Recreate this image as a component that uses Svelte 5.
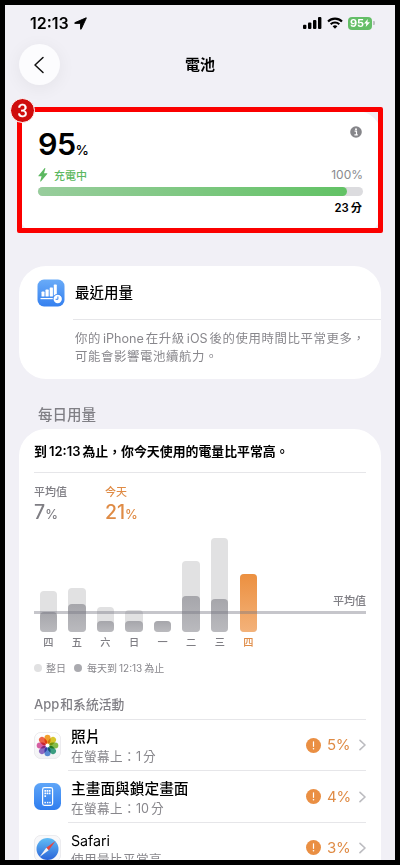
<script>
  const days = [
    { label: '四', full: 41.5, part: 20 },
    { label: '五', full: 44, part: 28 },
    { label: '六', full: 25, part: 11.5 },
    { label: '日', full: 22.5, part: 11.5 },
    { label: '一', full: 11.5, part: 11.5 },
    { label: '二', full: 71.5, part: 36 },
    { label: '三', full: 94, part: 33 },
    { label: '四', full: 58, part: 58, today: true }
  ];
  const apps = [
    { id: 'photos', name: '照片', note: '在螢幕上：', num: '1', unit: '分', pct: '5%' },
    { id: 'home', name: '主畫面與鎖定畫面', note: '在螢幕上：', num: '10', unit: '分', pct: '4%' },
    { id: 'safari', name: 'Safari', note: '使用量比平常高', num: '', unit: '', pct: '3%' }
  ];
  const petals = ['#f39a1e', '#d9c51b', '#7fbd3c', '#2f9d7c', '#4f86d8', '#8b62c4', '#d9559f', '#ee5a3c'];
</script>

<div class="device">
  <div class="status">
    <span class="time">12:13</span>
    <svg class="loc" width="13" height="13" viewBox="0 0 13 13"><path d="M12.2.8 1 5.6c-.5.3-.4.8.1.8h5.4v5.4c0 .6.6.7.8.1L12.3 1.1c.1-.2 0-.4-.1-.3Z" stroke="#000" stroke-width=".9" stroke-linejoin="round" /></svg>
    <svg class="signal" width="19" height="12" viewBox="0 0 19 12"><rect y="7.8" width="3.4" height="4.2" rx="1" /><rect x="5" y="5.6" width="3.4" height="6.4" rx="1" /><rect x="10" y="3" width="3.4" height="9" rx="1" /><rect x="15" width="3.4" height="12" rx="1" /></svg>
    <svg class="wifi" width="16" height="12" viewBox="0 0 16 12"><g fill="none" stroke="#000" stroke-width="2.1"><path d="M1 4.5a10 10 0 0 1 14 0" /><path d="M3.7 7.3a6.2 6.2 0 0 1 8.6 0" /></g><path d="M5.6 9.3a3.5 3.5 0 0 1 4.8 0L8 11.8Z" /></svg>
    <div class="batt"><span>95</span><svg width="6" height="8" viewBox="0 0 6 8"><path d="M3.8 0 0 4.6h2.3L1.7 8 6 3.2H3.4Z" fill="#fff" /></svg></div>
    <i class="cap"></i>
  </div>

  <header>
    <div class="back"><svg width="12" height="18" viewBox="0 0 12 18"><path d="M10 1.5 2 9l8 7.5" fill="none" stroke="#111" stroke-width="1.5" stroke-linecap="round" stroke-linejoin="round" /></svg></div>
    <h1>電池</h1>
  </header>

  <section class="card level">
    <div class="frame"></div>
    <div class="step">3</div>
    <div class="top">
      <div class="big">95<small>%</small></div>
      <svg class="info" width="12" height="12" viewBox="0 0 12 12"><circle cx="6" cy="6" r="5.8" fill="#86868a" /><circle cx="6" cy="3.2" r="1" fill="#fff" /><path d="M4.6 5.2h1.9v3.5M4.4 8.9h3.4" fill="none" stroke="#fff" stroke-width="1.2" /></svg>
    </div>
    <div class="charge">
      <svg width="10" height="14" viewBox="0 0 10 14"><path d="M6.5.3.4 7.7c-.2.3 0 .5.2.5h3L2.2 13c-.1.6.4.8.7.4l6.3-7.5c.3-.3.1-.6-.3-.6H6L7.3.8c.2-.6-.4-.9-.8-.5Z" fill="#5cb860" /></svg>
      <span class="state">充電中</span><span class="max">100%</span>
    </div>
    <div class="track"><div class="fill" style="width: 95.2%"></div></div>
    <div class="left">23<b>分</b></div>
  </section>

  <section class="card recent">
    <div class="rhead">
      <svg width="28" height="28" viewBox="0 0 28 28">
        <defs><linearGradient id="rb" x2="0" y2="1"><stop stop-color="#69abf8" /><stop offset="1" stop-color="#3580ef" /></linearGradient></defs>
        <rect x=".5" y=".5" width="27" height="27" rx="6.5" fill="url(#rb)" />
        <g fill="#fff"><rect x="4.5" y="12.6" width="3" height="5" rx=".6" /><rect x="8.5" y="10.6" width="3.2" height="7" rx=".6" /><rect x="12.7" y="8.4" width="3.2" height="9.2" rx=".6" /><rect x="16.8" y="5.6" width="3" height="12" rx=".6" /><rect x="3.5" y="19" width="13" height="1.2" /><circle cx="20.7" cy="20" r="5" fill="#3b86f1" /><circle cx="20.7" cy="20" r="4.2" /></g>
        <path d="M20.9 17.5v2.8h-2.3" fill="none" stroke="#3b86f1" stroke-width="1" />
      </svg>
      <span>最近用量</span>
    </div>
    <div class="rbody">
      <p>你的<em>iPhone</em>在升級<em>iOS</em>後的使用時間比平常更多，</p>
      <p>可能會影響電池續航力。</p>
    </div>
  </section>

  <h2>每日用量</h2>

  <section class="card daily">
    <div class="summary">到<em>12:13</em>為止，你今天使用的電量比平常高。</div>
    <div class="stats">
      <div class="stat"><span>平均值</span><strong>7<small>%</small></strong></div>
      <div class="stat now"><span>今天</span><strong>21<small>%</small></strong></div>
    </div>
    <div class="chart">
      <div class="bars">
        {#each days as d}
          <div class="day" class:today={d.today}>
            <div class="bar" style="height: {d.full}px"><div class="part" style="height: {d.part}px"></div></div>
            <span>{d.label}</span>
          </div>
        {/each}
      </div>
      <div class="avg"></div>
      <span class="avgname">平均值</span>
    </div>
    <div class="legend"><i></i><span class="whole">整日</span><i class="dark"></i><span>每天到<em>12:13</em>為止</span></div>
    <h3>App<b>和系統活動</b></h3>
    {#each apps as a, i}
      <div class="row">
        <div class="icon">
          {#if a.id === 'photos'}
            <svg width="27" height="27" viewBox="0 0 27 27"><defs><linearGradient id="pw" x2="0" y2="1"><stop stop-color="#fff" /><stop offset="1" stop-color="#f2f2f4" /></linearGradient></defs><rect x=".4" y=".4" width="26.2" height="26.2" rx="6.5" fill="url(#pw)" stroke="#e6e6ea" stroke-width=".8" />
              {#each petals as c, k}<rect class="petal" x="10.5" y="2.7" width="6" height="9" rx="3" fill={c} transform="rotate({k * 45} 13.5 13.5)" />{/each}
              <circle cx="13.5" cy="13.5" r="1.7" fill="#fff" /></svg>
          {:else if a.id === 'home'}
            <svg width="27" height="27" viewBox="0 0 27 27"><defs><linearGradient id="hb" x2="0" y2="1"><stop stop-color="#5fa6f8" /><stop offset="1" stop-color="#2f7def" /></linearGradient></defs><rect width="27" height="27" rx="6.5" fill="url(#hb)" /><rect x="8.6" y="4.7" width="10" height="17.6" rx="1.8" fill="none" stroke="#fff" stroke-width="1.2" />
              <g fill="#fff">{#each [7, 9.6, 12.2] as y}{#each [10.4, 12.6, 14.8] as x}{#if y < 12 || x < 12}<rect {x} {y} width="1.7" height="1.7" rx=".3" />{/if}{/each}{/each}<rect x="10.4" y="18.8" width="1.5" height="1.5" /><rect x="12.9" y="18.8" width="1.5" height="1.5" /><rect x="15.2" y="18.8" width="1.5" height="1.5" /></g></svg>
          {:else}
            <svg width="27" height="27" viewBox="0 0 27 27"><defs><linearGradient id="sb" x2="0" y2="1"><stop stop-color="#62bdf5" /><stop offset="1" stop-color="#2a63d8" /></linearGradient></defs><rect x=".4" y=".4" width="26.2" height="26.2" rx="6.5" fill="#f8f8fa" stroke="#e6e6ea" stroke-width=".8" /><circle cx="13.5" cy="14" r="11" fill="url(#sb)" /><path d="m21.5 6-9.2 6.8 2.4 2.4Z" fill="#e8443c" /><path d="m5.5 22 6.8-9.2 2.4 2.4Z" fill="#f3f3f6" /></svg>
          {/if}
        </div>
        <div class="body" class:first={i === 0}>
          <div class="txt"><div class="name" class:latin={i === 2}>{a.name}</div><div class="note">{a.note}<em>{a.num}</em>{a.unit}</div></div>
          <svg class="warn" width="15" height="15" viewBox="0 0 15 15"><circle cx="7.5" cy="7.5" r="7.5" fill="#ea8f43" /><path d="M7.5 3.8v4.5" stroke="#fff" stroke-width="1.2" stroke-linecap="round" /><circle cx="7.5" cy="10.8" r=".8" fill="#fff" /></svg>
          <span class="pct">{a.pct}</span>
          <svg class="chev" width="7" height="12" viewBox="0 0 7 12"><path d="m1 1.3 5 4.7-5 4.7" fill="none" stroke="#bcbcc0" stroke-width="1.6" stroke-linecap="round" stroke-linejoin="round" /></svg>
        </div>
      </div>
    {/each}
  </section>
</div>

<style>
  :global(body) { background: #000; }
  .device {
    box-sizing: border-box; width: 400px; height: 865px; border: 5px solid #000; background: #f1f0f6;
    overflow: hidden; font-family: Inter, "Noto Sans CJK TC", sans-serif; color: #000; white-space: nowrap;
  }
  .device * { box-sizing: border-box; }
  svg { display: block; flex: none; }
  em, i, b { font-style: normal; }
  b { font-weight: inherit; }
  h1, h2, h3, p { margin: 0; }
  .status { display: flex; align-items: center; height: 36px; padding: 0 20px 0 25px; }
  .time { font-size: 16px; font-weight: 600; line-height: 36px; width: 44px; flex: none; }
  .signal { margin-left: 216px; }
  .wifi { margin-left: 5px; }
  .batt { display: flex; align-items: center; justify-content: center; margin-left: 5px; width: 24px; height: 13px; border-radius: 4px; background: #64be67; color: #fff; font-size: 11px; font-weight: 700; flex: none; }
  .cap { width: 1.5px; height: 4px; margin-left: 1px; background: #c0c0c4; border-radius: 0 1px 1px 0; flex: none; }
  header { display: flex; align-items: center; height: 47px; padding-left: 14px; }
  .back { display: flex; align-items: center; justify-content: center; width: 41px; height: 41px; border-radius: 50%; background: #fcfcfe; box-shadow: 0 3px 18px rgba(0, 0, 0, .06); padding-right: 2px; }
  h1 { flex: 1; text-align: center; margin-right: 55px; padding-top: 1px; font-size: 15px; font-weight: 700; line-height: 20px; }
  .card { margin: 0 14px; background: #fff; border-radius: 27px; }
  .level { position: relative; margin-top: 23px; height: 121px; padding: 15px 18px 0 19px; border-radius: 6px 24px 18px 18px; }
  .frame { position: absolute; left: -2px; top: -4px; width: 366px; height: 126px; border: 5px solid #fb0000; border-radius: 2px; }
  .step { position: absolute; left: -9px; top: -13px; width: 25px; height: 25px; border-radius: 50%; background: #cf0c0c; border: 1px solid #fff; color: #fff; font-family: "Liberation Sans", sans-serif; font-size: 18px; line-height: 24px; text-align: center; -webkit-text-stroke: .3px #fff; }
  .top { display: flex; justify-content: space-between; height: 38px; }
  .big { font-size: 30.5px; font-weight: 600; line-height: 36px; letter-spacing: -.6px; }
  .big small { font-size: 13.5px; font-weight: 500; }
  .info { margin-right: 1px; }
  .charge { display: flex; align-items: center; height: 22px; }
  .state { color: #5cb860; font-size: 11px; font-weight: 500; margin-left: 6px; line-height: 20px; padding-top: 1px; }
  .max { margin-left: auto; color: #8a8a8e; font-size: 12px; line-height: 20px; }
  .track { height: 9px; margin-top: 1px; border-radius: 5px; background: #dcdcdf; }
  .fill { height: 100%; border-radius: 5px; background: linear-gradient(90deg, #98cd9c, #62c265); }
  .left { text-align: right; font-size: 11.3px; font-weight: 600; line-height: 16px; height: 16px; margin: 4px 1px 0 0; }
  .left b { margin-left: 2px; }
  .recent { margin-top: 34px; height: 113px; }
  .rhead { display: flex; align-items: center; height: 53px; padding-left: 18px; font-size: 14.5px; font-weight: 500; line-height: 20px; }
  .rhead span { margin-left: 10px; padding-top: 1px; }
  .rbody { margin-left: 54px; padding: 10px 0 0 2px; border-top: 1px solid #e6e6e9; color: #88878c; }
  p { height: 18px; line-height: 18px; font-size: 12.4px; letter-spacing: .6px; }
  p em { margin: 0 2px; letter-spacing: 0; font-size: 12.6px; }
  h2 { margin: 25px 0 0 33px; height: 22px; font-size: 14.5px; line-height: 22px; font-weight: 500; color: #807f85; }
  .daily { margin-top: 3px; height: 500px; padding: 0 15px; }
  .summary { height: 44px; line-height: 44px; border-bottom: 1px solid #e6e6e9; font-size: 12.9px; font-weight: 700; }
  .summary em { margin: 0 2px; font-weight: 600; font-size: 13px; }
  .stats { display: flex; height: 56px; padding-top: 10px; color: #7f7e84; }
  .stat { display: flex; flex-direction: column; width: 71px; }
  .stat span { font-size: 11px; line-height: 18px; height: 17px; font-weight: 500; }
  .stat strong { font-size: 19.5px; line-height: 24px; font-weight: 500; }
  .stat small { font-size: 12.8px; }
  .now { color: #df8b45; }
  .chart { position: relative; height: 121px; }
  .bars { display: flex; align-items: flex-end; height: 121px; padding-left: 5.6px; gap: 11.2px; }
  .day { width: 17.4px; display: flex; flex-direction: column; }
  .bar { display: flex; align-items: flex-end; background: #e1e1e2; border-radius: 4px; }
  .part { width: 100%; border-radius: 4px; background: linear-gradient(#a6a6ab, #bababe); }
  .today .part { background: linear-gradient(#ec9040, #f3b27a); }
  .day span { font-size: 10.2px; line-height: 20px; height: 18px; text-align: center; color: #7f7e84; font-weight: 500; }
  .day.today span { color: #df8b45; }
  .avg { position: absolute; left: 0; right: 0; bottom: 36px; height: 3px; background: rgba(120, 120, 130, .42); }
  .avgname { position: absolute; right: 0; bottom: 41px; font-size: 11px; line-height: 16px; height: 16px; color: #7f7e84; font-weight: 500; }
  .legend { display: flex; align-items: center; height: 35px; color: #88878c; font-size: 10px; line-height: 16px; }
  .legend i { width: 8px; height: 8px; border-radius: 50%; background: #e1e1e2; margin-right: 4px; }
  .legend .dark { background: #aaaaaf; margin-left: 8px; margin-right: 5px; }
  .legend em { margin: 0 2px; }
  h3 { height: 35px; line-height: 39px; border-bottom: 1px solid #e6e6e9; font-size: 13px; font-weight: 500; color: #807f85; }
  h3 b { margin-left: 1px; font-size: 12.8px; }
  .row { display: flex; height: 51.4px; }
  .icon { width: 34px; padding-top: 12px; }
  .petal { mix-blend-mode: multiply; opacity: .93; }
  .body { flex: 1; display: flex; align-items: center; border-bottom: 1px solid #e6e6e9; padding-left: 3px; }
  .txt { flex: 1; padding-top: 3px; }
  .name { font-size: 14.7px; line-height: 19px; height: 19px; font-weight: 500; }
  .name.latin { font-weight: 400; font-size: 14.3px; letter-spacing: -.1px; line-height: 20px; }
  .note { font-size: 12.6px; letter-spacing: .4px; line-height: 19px; height: 18px; color: #88878c; }
  .note em { margin-right: 2px; letter-spacing: 0; }
  .pct { width: 24px; margin-left: 6px; font-size: 15px; letter-spacing: -.3px; line-height: 20px; color: #df8b45; }
  .chev { margin: 0 0 0 8px; }
</style>
